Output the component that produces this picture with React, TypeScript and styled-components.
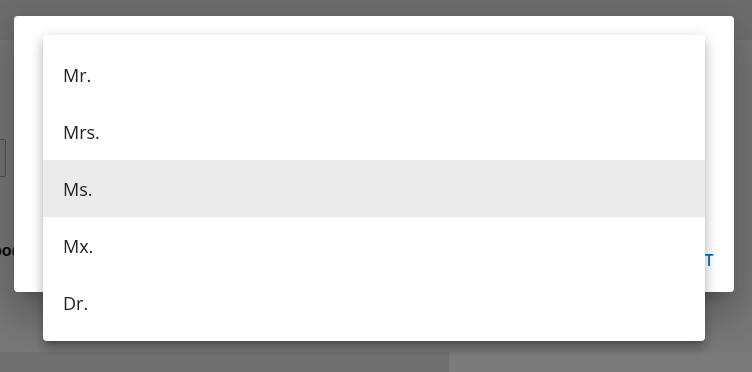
import styled, { createGlobalStyle } from 'styled-components';
import { useState } from 'react';

const GlobalStyle = createGlobalStyle`
    html, body {
        margin: 0;
        padding: 0;
        width: 100%;
        height: 100%;
        overflow: hidden;
    }

    body {
        font-family: "Open Sans", "Liberation Sans", sans-serif;
        background: #ececec;
    }
`;

const Page = styled.div`
    width: 752px;
    height: 372px;
    display: flex;
    flex-direction: column;
`;

const PageHeader = styled.header`
    height: 40px;
    flex-shrink: 0;
    background: #dadada;
`;

const PageMain = styled.main`
    flex: 1;
    display: flex;
    flex-direction: column;
    padding-top: 99px;
    background: #ececec;
`;

const FieldBox = styled.div`
    width: 200px;
    height: 38px;
    margin-left: -194px;
    box-sizing: border-box;
    border: 1px solid #a2a2a2;
    border-radius: 2px;
    background: #e4e4e4;
`;

// only the tail of this line peeks out left of the dialog
const EmailClip = styled.div`
    width: 14px;
    margin-top: 65px;
    overflow: hidden;
`;

const EmailText = styled.div`
    margin-left: -8px;
    font-family: "Liberation Sans", Arial, sans-serif;
    font-weight: bold;
    font-size: 16px;
    color: #111;
    white-space: nowrap;
`;

const PageFooter = styled.footer`
    height: 20px;
    flex-shrink: 0;
    display: grid;
    grid-template-columns: 449px 1fr;
`;

const FooterPart = styled.div<{ $tone: string }>`
    background: ${p => p.$tone};
`;

const Overlay = styled.div`
    position: fixed;
    inset: 0;
    background: rgba(0, 0, 0, 0.5);
    display: flex;
    align-items: flex-start;
    padding: 16px 18px 0 14px;
`;

const Dialog = styled.div`
    position: relative;
    width: 720px;
    height: 276px;
    background: #fff;
    border-radius: 4px;
    box-shadow: 0 11px 15px -7px rgba(0, 0, 0, 0.2), 0 24px 38px 3px rgba(0, 0, 0, 0.14), 0 9px 46px 8px rgba(0, 0, 0, 0.12);
    display: flex;
    flex-direction: column;
`;

const Actions = styled.div`
    margin-top: auto;
    display: flex;
    justify-content: flex-end;
    padding: 0 20px 22px;
`;

const TextButton = styled.button`
    border: 0;
    padding: 0;
    background: none;
    font-family: "Open Sans", "Liberation Sans", sans-serif;
    font-weight: 600;
    font-size: 16px;
    line-height: 20px;
    letter-spacing: 0.5px;
    color: #0a6fc4;
    text-transform: uppercase;
`;

const Menu = styled.ul`
    position: absolute;
    left: 29px;
    top: 19px;
    width: 662px;
    margin: 0;
    padding: 11px 0 10px;
    list-style: none;
    background: #fff;
    border-radius: 4px;
    box-shadow: 0 5px 5px -3px rgba(0, 0, 0, 0.2), 0 8px 10px 1px rgba(0, 0, 0, 0.14), 0 3px 14px 2px rgba(0, 0, 0, 0.12);
`;

const MenuItem = styled.li<{ $active: boolean }>`
    height: 57px;
    display: flex;
    align-items: center;
    padding-left: 20px;
    font-size: 18px;
    color: #222;
    background: ${p => (p.$active ? '#ebebeb' : 'transparent')};
    cursor: pointer;
`;

const titles = ['Mr.', 'Mrs.', 'Ms.', 'Mx.', 'Dr.'];

export default function App() {
    const [hovered, setHovered] = useState('Ms.');

    return (
        <>
            <GlobalStyle />
            <Page>
                <PageHeader />
                <PageMain>
                    <FieldBox />
                    <EmailClip>
                        <EmailText>bo@example.com</EmailText>
                    </EmailClip>
                </PageMain>
                <PageFooter>
                    <FooterPart $tone="#e0e0e0" />
                    <FooterPart $tone="#f6f6f6" />
                </PageFooter>
            </Page>

            <Overlay>
                <Dialog>
                    <Actions>
                        <TextButton>Next</TextButton>
                    </Actions>

                    <Menu>
                        {titles.map(t => (
                            <MenuItem
                                key={t}
                                $active={t === hovered}
                                onMouseEnter={() => setHovered(t)}
                            >
                                {t}
                            </MenuItem>
                        ))}
                    </Menu>
                </Dialog>
            </Overlay>
        </>
    );
}
